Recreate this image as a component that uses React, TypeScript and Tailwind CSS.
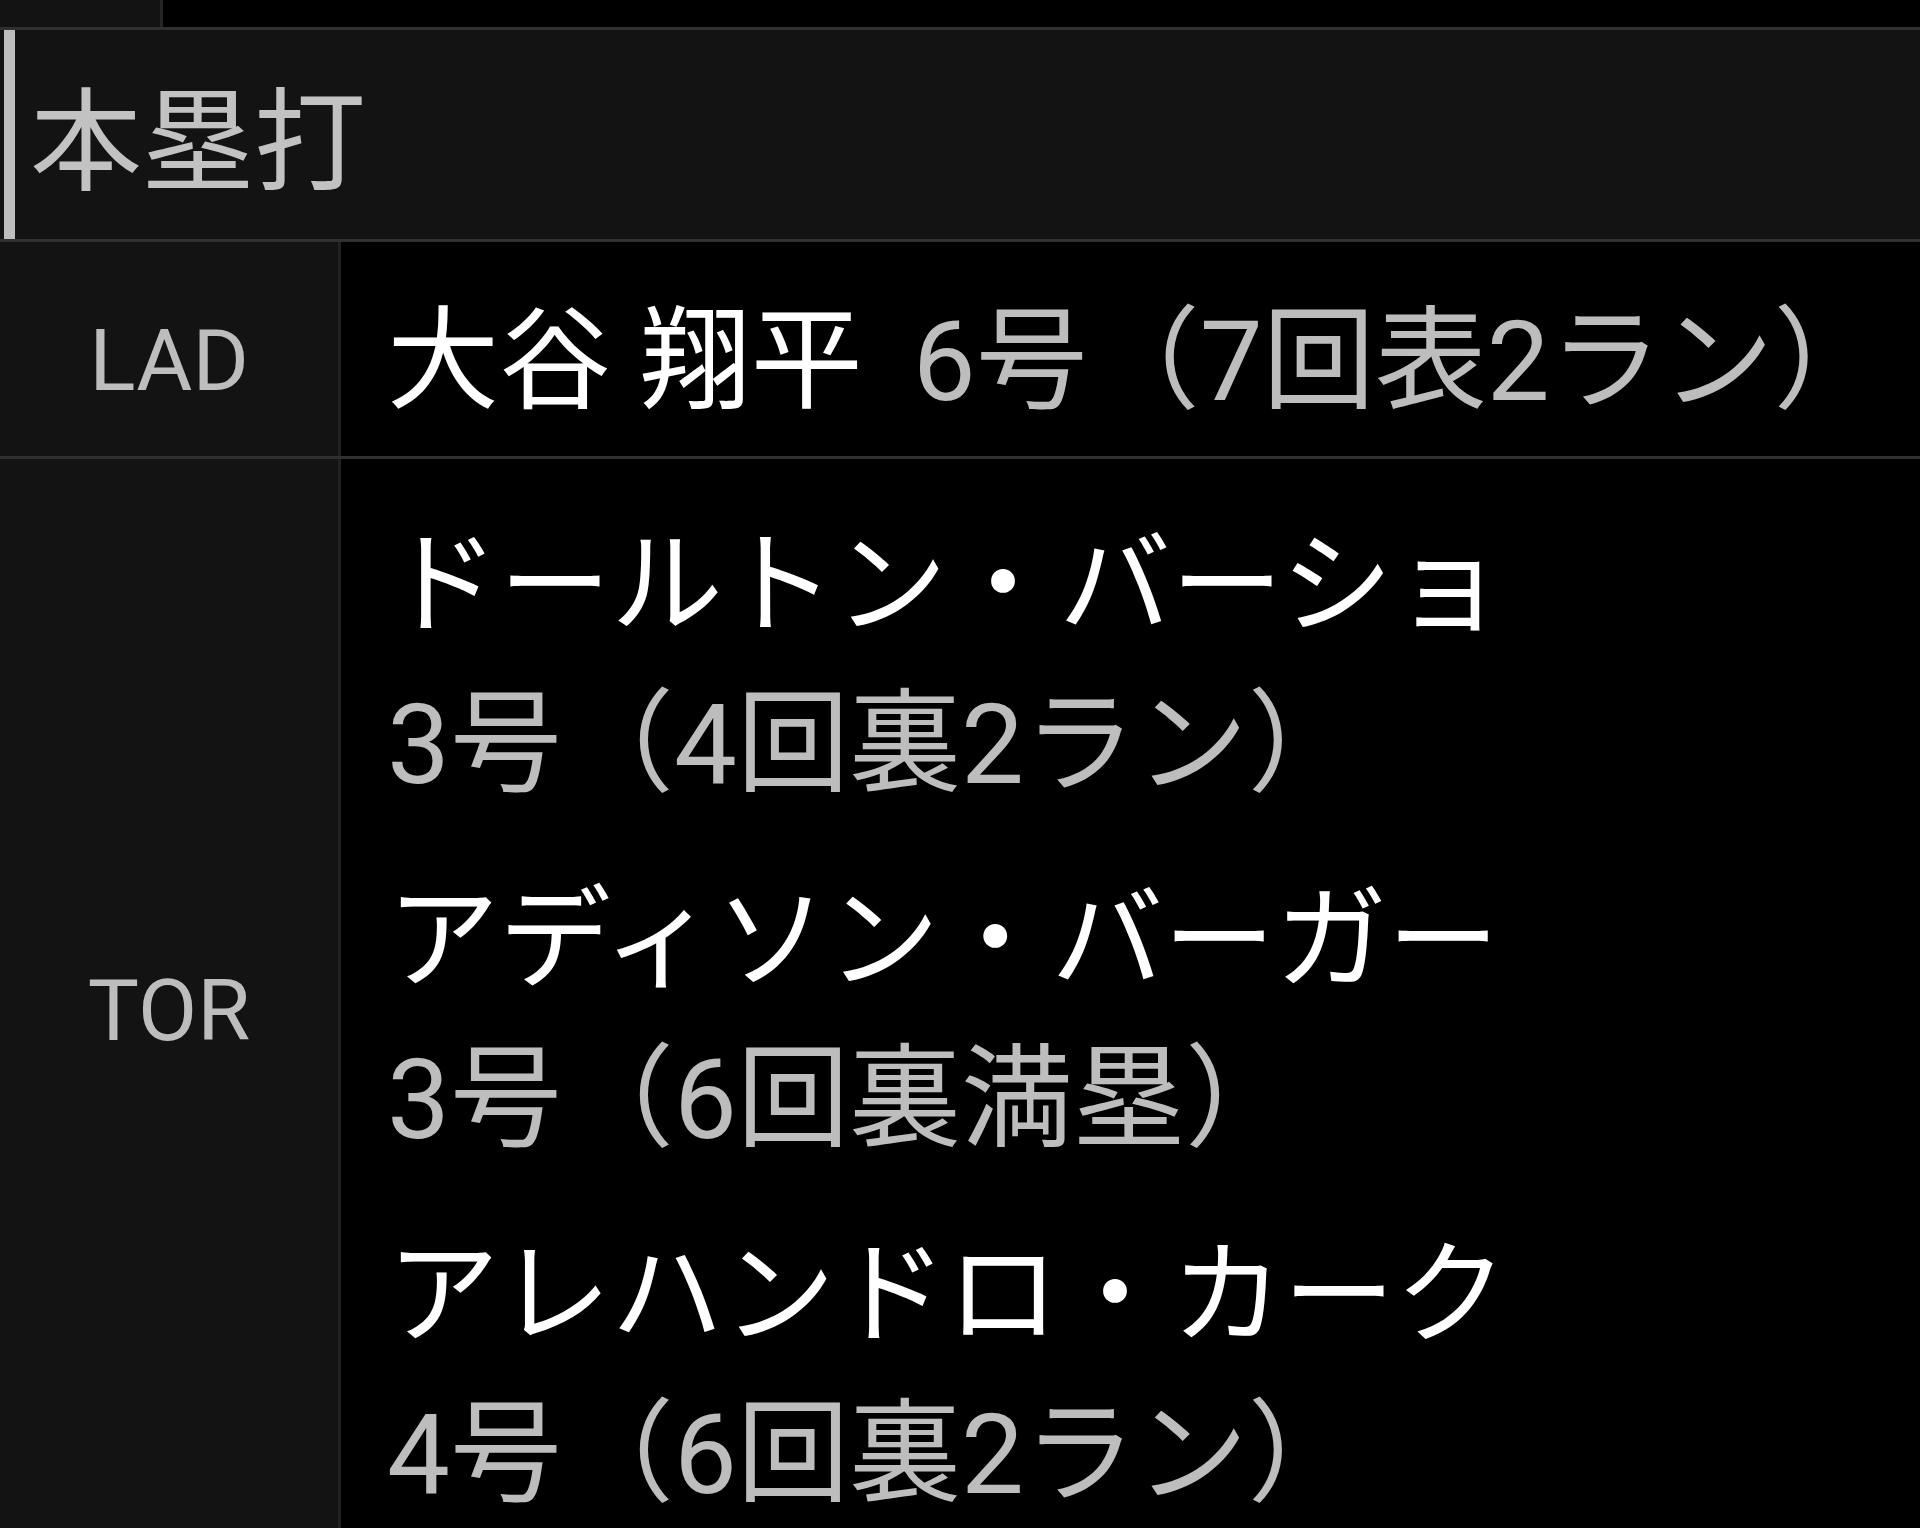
const FONT = { fontFamily: 'Roboto, "Noto Sans CJK JP", sans-serif' };

type HomeRun = { name: string; note: string };

type TeamRow = { team: string; hits: HomeRun[] };

const rows: TeamRow[] = [
  {
    team: "LAD",
    hits: [{ name: "大谷 翔平", note: "6号（7回表2ラン）" }],
  },
  {
    team: "TOR",
    hits: [
      { name: "ドールトン・バーショ", note: "3号（4回裏2ラン）" },
      { name: "アディソン・バーガー", note: "3号（6回裏満塁）" },
      { name: "アレハンドロ・カーク", note: "4号（6回裏2ラン）" },
    ],
  },
];

function HitLine({ hit }: { hit: HomeRun }) {
  return (
    <div className="flex flex-wrap gap-x-[50px] leading-[159px]">
      <span className="text-white">{hit.name}</span>
      <span className="text-[#bdbdbd]">{hit.note}</span>
    </div>
  );
}

export default function App() {
  return (
    <div className="min-h-screen bg-black text-[112px]" style={FONT}>
      {/* tail of the previous table */}
      <div className="flex h-[27px]">
        <div className="w-[163px] bg-[#131313] border-r-[3px] border-[#262626]" />
        <div className="flex-1 bg-black" />
      </div>

      {/* section heading */}
      <div className="flex h-[215px] bg-[#131313] border-y-[3px] border-[#303030]">
        <div className="ml-[4px] w-[11px] bg-[#bdbdbd]" />
        <div className="flex items-center pl-[15px] pt-[18px] text-[#c2c2c2] leading-none">
          本塁打
        </div>
      </div>

      {rows.map((row, i) => {
        const single = row.hits.length === 1;
        return (
          <div
            key={row.team}
            className={i === 0 ? "flex border-b-[3px] border-[#303030]" : "flex"}
          >
            <div
              className={
                single
                  ? "w-[341px] shrink-0 bg-[#131313] border-r-[3px] border-[#222222] flex items-center justify-center pt-[22px] text-[86px] text-[#bdbdbd]"
                  : "w-[341px] shrink-0 bg-[#131313] border-r-[3px] border-[#222222] flex items-center justify-center pt-[4px] text-[86px] text-[#bdbdbd]"
              }
            >
              {row.team}
            </div>
            <div
              className={
                single
                  ? "flex-1 pl-[46px] pr-[10px] pt-[40px] pb-[15px] flex flex-col"
                  : "flex-1 pl-[46px] pr-[10px] pt-[47px] pb-[23px] flex flex-col gap-[37px]"
              }
            >
              {row.hits.map((hit) => (
                <HitLine key={hit.name} hit={hit} />
              ))}
            </div>
          </div>
        );
      })}
    </div>
  );
}
